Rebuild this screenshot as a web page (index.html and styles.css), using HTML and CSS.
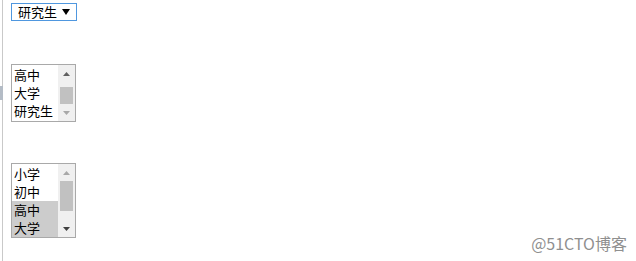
FILE: index.html
```html
<!DOCTYPE html>
<html lang="zh">
<head>
<meta charset="utf-8">
<title>select</title>
<link rel="stylesheet" href="styles.css">
</head>
<body>
<span class="grip"></span>
<div class="page">
  <div class="dropdown">
    <span class="dd-value">研究生</span>
    <svg class="dd-arrow" width="8" height="6" viewBox="0 0 8 6"><path d="M0 0H8L4 6Z" fill="#000"/></svg>
  </div>

  <div class="listbox lb-one">
    <div class="lb-items">
      <div class="lb-row">高中</div>
      <div class="lb-row">大学</div>
      <div class="lb-row">研究生</div>
    </div>
    <div class="sbar">
      <div class="sbtn"><svg width="7" height="4" viewBox="0 0 7 4"><path d="M3.5 0L7 4H0Z" fill="#606060"/></svg></div>
      <div class="track track-end"><div class="thumb thumb-a"></div></div>
      <div class="sbtn"><svg width="7" height="4" viewBox="0 0 7 4"><path d="M0 0H7L3.5 4Z" fill="#a8a8a8"/></svg></div>
    </div>
  </div>

  <div class="listbox lb-two">
    <div class="lb-items">
      <div class="lb-row">小学</div>
      <div class="lb-row">初中</div>
      <div class="lb-row sel">高中</div>
      <div class="lb-row sel">大学</div>
    </div>
    <div class="sbar">
      <div class="sbtn"><svg width="7" height="4" viewBox="0 0 7 4"><path d="M3.5 0L7 4H0Z" fill="#a8a8a8"/></svg></div>
      <div class="track"><div class="thumb thumb-b"></div></div>
      <div class="sbtn"><svg width="7" height="4" viewBox="0 0 7 4"><path d="M0 0H7L3.5 4Z" fill="#404040"/></svg></div>
    </div>
  </div>
</div>
<div class="watermark">@51CTO博客</div>
</body>
</html>
```

FILE: styles.css
```css
html, body {
  margin: 0;
  padding: 0;
  background: #fff;
}
body {
  position: relative;
  width: 636px;
  height: 261px;
  overflow: hidden;
  font-family: "Microsoft YaHei", "Noto Sans CJK SC", sans-serif;
  font-size: 13px;
  color: #000;
}
.page {
  margin-left: 2px;
  border-left: 1px solid #c9c9c9;
  padding: 3px 0 0 8px;
  height: 100%;
  box-sizing: border-box;
  display: flex;
  flex-direction: column;
  align-items: flex-start;
}
.grip {
  position: absolute;
  left: 0;
  top: 86px;
  width: 3px;
  height: 14px;
  background: #b4bcc6;
}
.dropdown {
  width: 66px;
  height: 18px;
  box-sizing: border-box;
  border: 1px solid #4f97df;
  display: flex;
  align-items: center;
  padding-left: 6px;
  padding-right: 6px;
}
.dd-value {
  flex: 1;
  line-height: 16px;
}
.dd-arrow {
  display: block;
}
.listbox {
  width: 65px;
  box-sizing: border-box;
  border: 1px solid #a9a9a9;
  display: flex;
}
.lb-one {
  margin-top: 43px;
  height: 58px;
}
.lb-two {
  margin-top: 41px;
  height: 75px;
}
.lb-items {
  flex: 1;
  display: flex;
  flex-direction: column;
  padding-top: 1px;
}
.lb-row {
  height: 18px;
  line-height: 18px;
  padding-left: 2px;
  white-space: nowrap;
}
.lb-row.sel {
  background: #cccccc;
}
.sbar {
  width: 17px;
  background: #f0f0f0;
  display: flex;
  flex-direction: column;
}
.sbtn {
  height: 17px;
  display: flex;
  align-items: center;
  justify-content: center;
}
.sbtn svg {
  display: block;
}
.track {
  flex: 1;
  display: flex;
  flex-direction: column;
  align-items: center;
}
.track-end {
  justify-content: flex-end;
}
.thumb {
  width: 13px;
  background: #c1c1c1;
}
.thumb-a {
  height: 17px;
}
.thumb-b {
  height: 30px;
}
.watermark {
  position: absolute;
  right: 9px;
  top: 233px;
  font-size: 16px;
  color: #8f8f8f;
  line-height: 20px;
  font-family: "Noto Sans CJK SC", sans-serif;
}
```
